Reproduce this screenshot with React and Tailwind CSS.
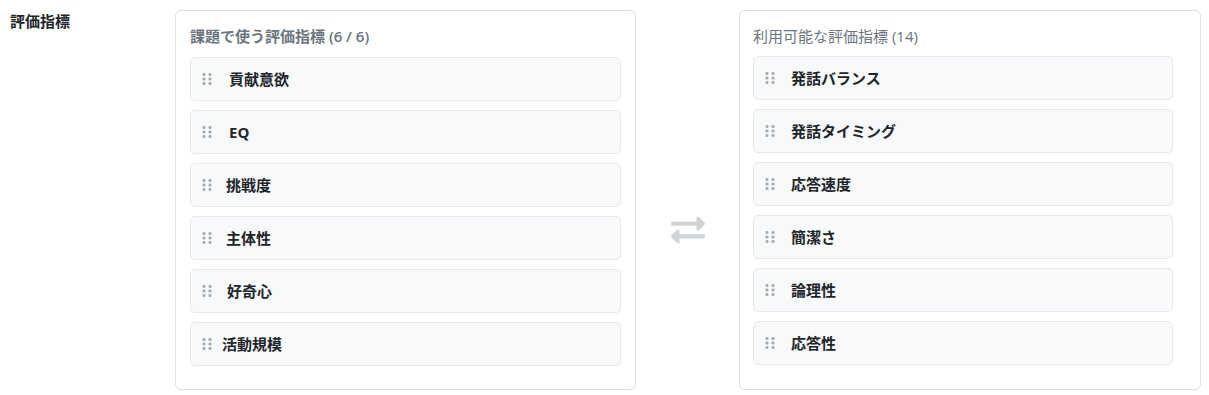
import { FaExchangeAlt } from 'react-icons/fa';

const selected = [
  { name: '貢献意欲', pl: 'pl-[38px]' },
  { name: 'EQ', pl: 'pl-[38px]' },
  { name: '挑戦度', pl: 'pl-[35px]' },
  { name: '主体性', pl: 'pl-[35px]' },
  { name: '好奇心', pl: 'pl-[36px]' },
  { name: '活動規模', pl: 'pl-[31px]' },
];

const available = ['発話バランス', '発話タイミング', '応答速度', '簡潔さ', '論理性', '応答性'];

const Handle = () => (
  <svg width="10" height="13" viewBox="0 0 10 13" className="absolute left-[11px] top-1/2 -translate-y-1/2 text-[#a6acb3]" fill="currentColor">
    <rect x="0.5" y="0.5" width="3" height="3" rx="1.2" />
    <rect x="6.5" y="0.5" width="3" height="3" rx="1.2" />
    <rect x="0.5" y="5" width="3" height="3" rx="1.2" />
    <rect x="6.5" y="5" width="3" height="3" rx="1.2" />
    <rect x="0.5" y="9.5" width="3" height="3" rx="1.2" />
    <rect x="6.5" y="9.5" width="3" height="3" rx="1.2" />
  </svg>
);

const Item = ({ name, pl = 'pl-[37px]' }) => (
  <div className={`relative h-[44px] flex items-center ${pl} bg-[#f8f9fa] border border-[#e6e8eb] rounded-[5px] text-[15px] font-bold text-[#212529]`}>
    <Handle />
    {name}
  </div>
);

export default function App() {
  return (
    <div className="flex bg-white h-[395px] font-['Open_Sans','Noto_Sans_CJK_JP',sans-serif]">
      <div className="w-[175px] pl-[10px] pt-[10px] text-[15px] font-bold text-[#212529]">評価指標</div>

      <div className="mt-[10px] w-[461px] h-[380px] border border-[#dcdfe3] rounded-[6px] pl-[14px] pr-[14px] pt-[14px]">
        <div className="text-[15px] font-semibold text-[#6c757d] leading-[22px] mb-[10px]">課題で使う評価指標 (6 / 6)</div>
        <div className="flex flex-col gap-[9px]">
          {selected.map((s) => (
            <Item key={s.name} name={s.name} pl={s.pl} />
          ))}
        </div>
      </div>

      <div className="w-[103px] flex justify-center pt-[213px] text-[#d0d3d8]">
        <FaExchangeAlt size={34} />
      </div>

      <div className="mt-[10px] w-[462px] h-[380px] border border-[#dcdfe3] rounded-[6px] pl-[13px] pr-[27px] pt-[14px]">
        <div className="text-[15px] text-[#6c757d] leading-[22px] mb-[9px]">利用可能な評価指標 (14)</div>
        <div className="flex flex-col gap-[9px]">
          {available.map((a) => (
            <Item key={a} name={a} />
          ))}
        </div>
      </div>
    </div>
  );
}
